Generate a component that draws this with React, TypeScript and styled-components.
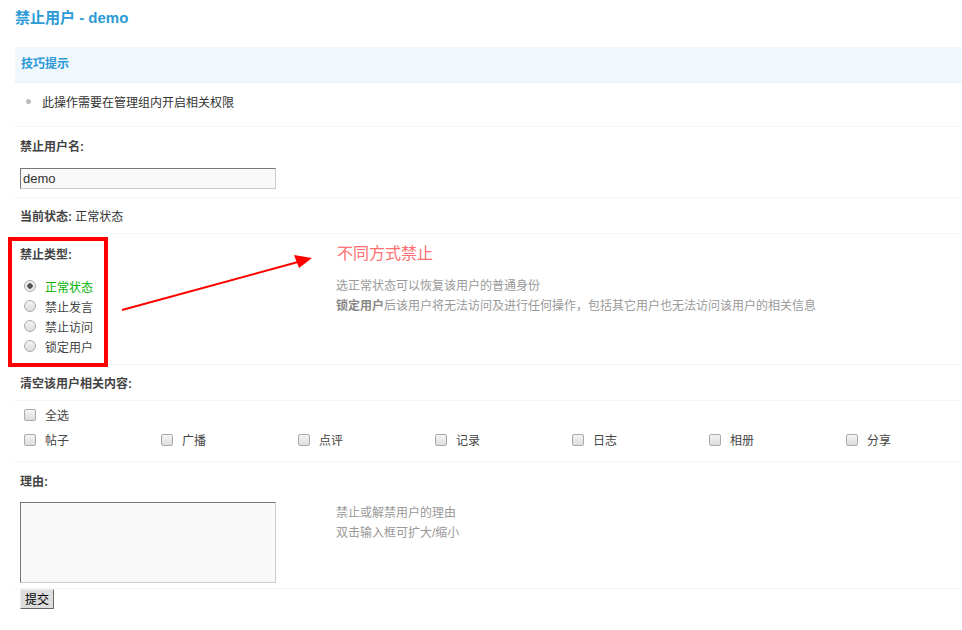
import React from "react";
import styled, { createGlobalStyle } from "styled-components";

const Global = createGlobalStyle`
  body { margin: 0; background: #fff; font-family: "Liberation Sans", "Noto Sans CJK SC", sans-serif; font-size: 12px; color: #333; }
`;
const Page = styled.div` position: relative; padding: 8px 0 0 15px; width: 947px; `;
const Title = styled.h1` margin: 0 0 19px; font-size: 15px; font-weight: bold; color: #2b9ad6; line-height: 20px; `;
const TipHead = styled.div` background: #f0f7fd; height: 35px; line-height: 35px; padding-left: 6px; color: #2b9ad6; font-weight: bold; border-bottom: 1px dotted #deeffb; `;
const Row = styled.div<{ h: number; sep?: boolean }>`
  height: ${p => p.h}px; display: flex; align-items: center; padding-left: 5px;
  border-bottom: ${p => (p.sep === false ? "none" : "1px dotted #deeffb")}; box-sizing: border-box;
`;
const Bullet = styled.span` width: 5px; height: 5px; border-radius: 50%; background: #bbb; margin: 0 11px 0 6px; `;
const Label = styled.b` color: #444; `;
const Input = styled.div` width: 256px; height: 21px; box-sizing: border-box; border: 1px solid; border-color: #777 #ccc #ccc #777; background: #f9f9f9; padding-left: 2px; line-height: 19px; font-size: 13px; `;
const Area = styled.div` width: 256px; height: 81px; box-sizing: border-box; border: 1px solid; border-color: #777 #ccc #ccc #777; background: #f9f9f9; `;
const Split = styled.div<{ h: number }>` height: ${p => p.h}px; display: flex; padding-left: 5px; border-bottom: 1px dotted #deeffb; box-sizing: border-box; `;
const Left = styled.div` width: 316px; display: flex; flex-direction: column; `;
const Hint = styled.div<{ top: number }>` color: #999; line-height: 20px; padding-top: ${p => p.top}px; b { color: #888; } `;
const Radio = styled.div<{ on?: boolean; green?: boolean }>`
  display: flex; align-items: center; height: 20px; padding-left: 4px; color: ${p => (p.green ? "#00b300" : "#444")};
  &::before { content: ""; width: 10px; height: 10px; border-radius: 50%; border: 1px solid #aaa; margin-right: 9px;
    background: ${p => (p.on ? "radial-gradient(circle, #555 0 2.5px, #eee 3px)" : "linear-gradient(#f4f4f4,#ddd)")}; }
`;
const Checks = styled.div` display: flex; `;
const Check = styled.div`
  display: flex; align-items: center; width: 137px; box-sizing: border-box; padding-left: 4px; color: #444;
  &::before { content: ""; width: 10px; height: 10px; border: 1px solid #aaa; border-radius: 2px; margin-right: 9px; background: linear-gradient(#f4f4f4,#ddd); }
`;
const Button = styled.button` font-family: "Noto Sans CJK SC", sans-serif; font-size: 12px; height: 20px; padding: 0 4px; background: #ddd; border: 1px solid; border-color: #eee #666 #666 #eee; color: #000; margin: 9px 0 0 5px; line-height: 16px; `;
const RedBox = styled.div` position: absolute; left: 8px; top: 237px; width: 92px; height: 122px; border: 4px solid #f00; `;
const Note = styled.div` position: absolute; left: 337px; top: 240px; color: #ff6f6f; font-size: 16px; `;
const Arrow = styled.svg` position: absolute; left: 0; top: 0; pointer-events: none; `;

export default function App() {
  return (
    <>
      <Global />
      <Page>
        <Title>禁止用户 - demo</Title>
        <TipHead>技巧提示</TipHead>
        <Row h={44} style={{ paddingBottom: 6 }}><Bullet />此操作需要在管理组内开启相关权限</Row>
        <Row h={37} sep={false}><Label>禁止用户名:</Label></Row>
        <Row h={34} style={{ alignItems: "flex-start", paddingTop: 4 }}><Input>demo</Input></Row>
        <Row h={36}><Label>当前状态:</Label>&nbsp;正常状态</Row>
        <Split h={131}>
          <Left>
            <div style={{ paddingTop: 11, height: 42, boxSizing: "border-box" }}><Label>禁止类型:</Label></div>
            <Radio on green>正常状态</Radio>
            <Radio>禁止发言</Radio>
            <Radio>禁止访问</Radio>
            <Radio>锁定用户</Radio>
          </Left>
          <Hint top={42}>选正常状态可以恢复该用户的普通身份<br /><b>锁定用户</b>后该用户将无法访问及进行任何操作，包括其它用户也无法访问该用户的相关信息</Hint>
        </Split>
        <Row h={36}><Label>清空该用户相关内容:</Label></Row>
        <Row h={27} sep={false}><Check>全选</Check></Row>
        <Row h={34} style={{ alignItems: "flex-start", paddingTop: 3 }}>
          <Checks>{["帖子","广播","点评","记录","日志","相册","分享"].map(t => <Check key={t}>{t}</Check>)}</Checks>
        </Row>
        <Split h={127}>
          <Left>
            <div style={{ paddingTop: 10, height: 40, boxSizing: "border-box" }}><Label>理由:</Label></div>
            <Area />
          </Left>
          <Hint top={41}>禁止或解禁用户的理由<br />双击输入框可扩大/缩小</Hint>
        </Split>
        <Button style={{ marginTop: 0 }}>提交</Button>
        <RedBox />
        <Note>不同方式禁止</Note>
        <Arrow width="330" height="330" viewBox="0 0 330 330">
          <line x1="122" y1="310" x2="298" y2="262" stroke="#f00" strokeWidth="2" />
          <polygon points="312,258 294,255 299,268" fill="#f00" />
        </Arrow>
      </Page>
    </>
  );
}
